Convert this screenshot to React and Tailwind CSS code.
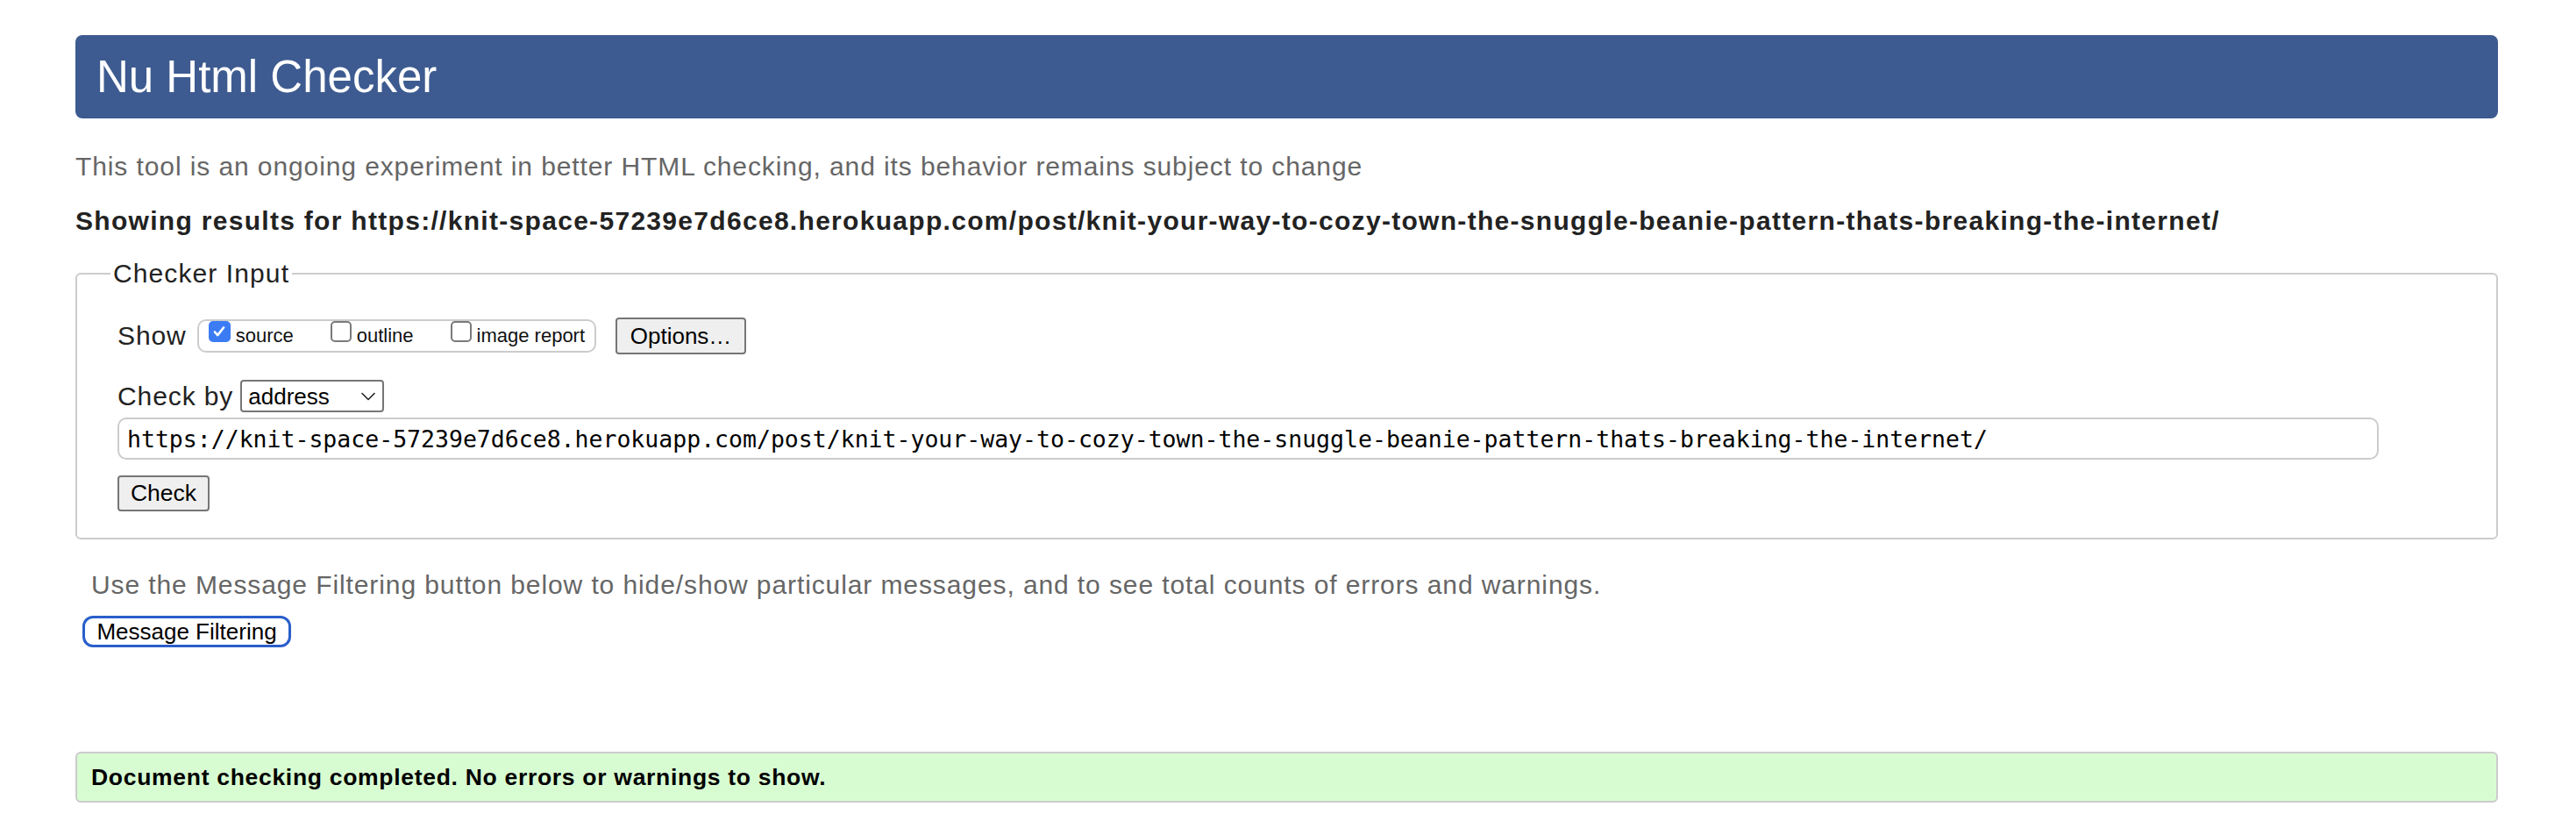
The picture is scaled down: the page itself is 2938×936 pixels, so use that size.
import { useState } from 'react'

const SITE_URL =
  'https://knit-space-57239e7d6ce8.herokuapp.com/post/knit-your-way-to-cozy-town-the-snuggle-beanie-pattern-thats-breaking-the-internet/'

function Tick({ checked }) {
  if (checked) {
    return (
      <span className="w-[25px] h-[24px] rounded-[5px] bg-[#3b7cf5] flex items-center justify-center shrink-0">
        <svg width="16" height="16" viewBox="0 0 16 16" fill="none">
          <path d="M3 8.5l3.2 3.6L13 3.5" stroke="white" strokeWidth="2.6" strokeLinecap="round" strokeLinejoin="round" />
        </svg>
      </span>
    )
  }
  return <span className="w-[24px] h-[24px] rounded-[5px] border-2 border-[#7a7a7a] bg-white shrink-0" />
}

function ShowOption({ label, checked }) {
  return (
    <label className="flex items-start">
      <Tick checked={checked} />
      <span className="ml-[6px] mt-[4px] text-[22px] leading-[26px] text-[#111]">{label}</span>
    </label>
  )
}

export default function App() {
  const [url] = useState(SITE_URL)

  return (
    <div className="min-h-[936px] bg-white pl-[86px] pr-[89px] pt-[40px] font-['Liberation_Sans',Arial,sans-serif]">
      {/* Title bar */}
      <header className="h-[95px] rounded-[8px] bg-[#3d5b90] flex items-center pl-[24px]">
        <h1 className="text-[51px] leading-none text-white">Nu Html Checker</h1>
      </header>

      <p className="mt-[37px] text-[30px] leading-[36px] tracking-[0.9px] text-[#666]">
        This tool is an ongoing experiment in better HTML checking, and its behavior remains subject to change
      </p>
      <p className="mt-[26px] text-[30px] leading-[36px] tracking-[1.3px] font-bold text-[#222]">
        Showing results for {url}
      </p>

      {/* Checker input */}
      <fieldset className="mt-[24px] border-2 border-[#ccc] rounded-[6px] pl-[46px] pr-[134px] pt-[32px] pb-[30px]">
        <legend className="ml-[-8px] px-[3px] text-[30px] leading-[36px] tracking-[1.1px] text-[#222]">Checker Input</legend>

        <div className="flex items-center h-[42px]">
          <span className="text-[30px] leading-[36px] tracking-[0.9px] text-[#222]">Show</span>
          <div className="ml-[12px] h-[38px] flex items-start gap-[42px] border-2 border-[#ccc] rounded-[10px] px-[11px]">
            <ShowOption label="source" checked />
            <ShowOption label="outline" />
            <ShowOption label="image report" />
          </div>
          <button className="ml-[22px] w-[149px] h-[42px] bg-[#efefef] border-2 border-[#767676] rounded-[4px] text-[26px] leading-none text-black">
            Options…
          </button>
        </div>

        <div className="mt-[29px] flex items-center h-[37px]">
          <span className="text-[30px] leading-[36px] tracking-[0.9px] text-[#222]">Check by</span>
          <div className="ml-[8px] w-[164px] h-[37px] border-2 border-[#767676] rounded-[4px] bg-white flex items-center justify-between pl-[7px] pr-[8px]">
            <span className="text-[26px] leading-none text-black">address</span>
            <svg width="16" height="10" viewBox="0 0 16 10" fill="none">
              <path d="M1 1.5l7 7 7-7" stroke="#222" strokeWidth="1.6" strokeLinecap="round" strokeLinejoin="round" />
            </svg>
          </div>
        </div>

        <input
          readOnly
          value={url}
          className="mt-[6px] block w-full h-[48px] border-2 border-[#ccc] rounded-[10px] px-[9px] bg-white text-[26.5px] text-black font-['DejaVu_Sans_Mono',monospace] outline-none"
        />

        <button className="mt-[18px] block w-[105px] h-[41px] bg-[#efefef] border-2 border-[#767676] rounded-[4px] text-[26.5px] leading-none text-black">
          Check
        </button>
      </fieldset>

      <p className="mt-[34px] pl-[18px] text-[30px] leading-[36px] tracking-[0.9px] text-[#666]">
        Use the Message Filtering button below to hide/show particular messages, and to see total counts of errors and warnings.
      </p>
      <button className="mt-[17px] ml-[8px] block w-[238px] h-[36px] bg-white border-[3px] border-[#2a5fcb] rounded-[12px] text-[26px] leading-none text-black">
        Message Filtering
      </button>

      {/* Result */}
      <div className="mt-[119px] h-[58px] flex items-center border-2 border-[#ccc] rounded-[6px] bg-[#d8fcd2] pl-[16px]">
        <span className="text-[26.5px] leading-none tracking-[0.7px] font-bold text-black">
          Document checking completed. No errors or warnings to show.
        </span>
      </div>
    </div>
  )
}
